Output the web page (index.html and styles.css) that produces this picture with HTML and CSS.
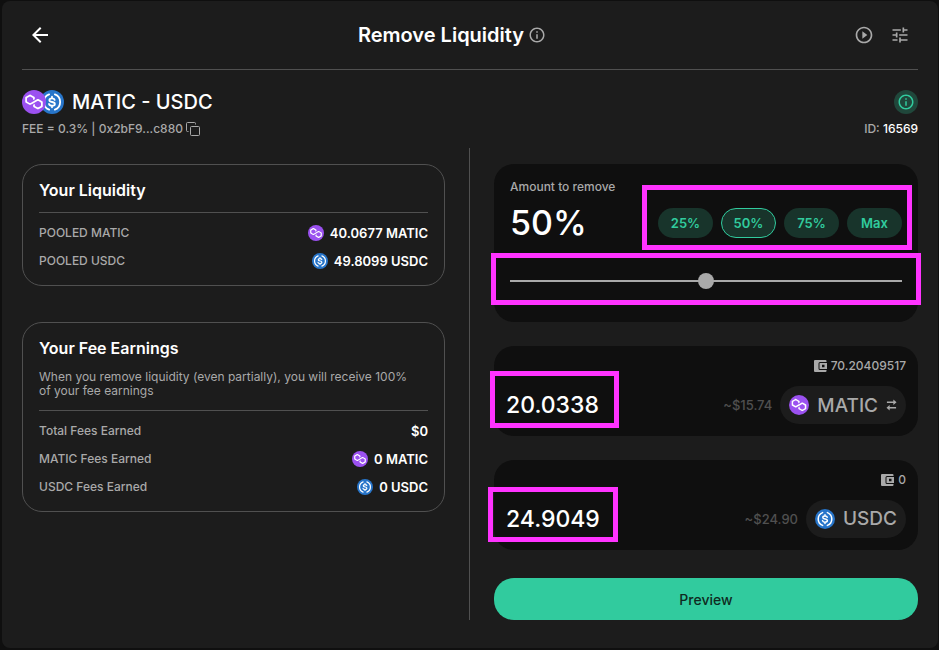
FILE: index.html
```html
<!DOCTYPE html>
<html lang="en">
<head>
    <meta charset="UTF-8">
    <meta name="viewport" content="width=device-width, initial-scale=1.0">
    <title>Remove Liquidity</title>
    <link rel="stylesheet" href="styles.css">
</head>
<body>
    <!-- Shared icons -->
    <svg class="sprite" aria-hidden="true">
        <symbol id="matic" viewBox="0 0 32 32">
            <circle cx="16" cy="16" r="16" fill="#9b51f0"/>
            <path transform="translate(16 16) scale(1.17) translate(-16 -16)" fill="#fff" d="M21.092 12.693c-.369-.215-.848-.215-1.254 0l-2.879 1.654-1.955 1.078-2.879 1.653c-.369.216-.848.216-1.254 0l-2.288-1.294c-.369-.215-.627-.61-.627-1.042V12.19c0-.431.221-.826.627-1.042l2.25-1.258c.37-.216.85-.216 1.256 0l2.25 1.258c.37.216.628.611.628 1.042v1.654l1.955-1.115v-1.653a1.16 1.16 0 00-.627-1.042l-4.17-2.372c-.369-.216-.848-.216-1.254 0l-4.244 2.372A1.16 1.16 0 006 11.076v4.78c0 .432.221.827.627 1.043l4.244 2.372c.369.215.849.215 1.254 0l2.879-1.618 1.955-1.114 2.879-1.617c.369-.216.848-.216 1.254 0l2.251 1.258c.37.215.627.61.627 1.042v2.552c0 .431-.22.826-.627 1.042l-2.25 1.294c-.37.216-.85.216-1.255 0l-2.251-1.258c-.37-.216-.628-.611-.628-1.042v-1.654l-1.955 1.115v1.653c0 .431.221.827.627 1.042l4.244 2.372c.369.216.848.216 1.254 0l4.244-2.372c.369-.215.627-.61.627-1.042v-4.78a1.16 1.16 0 00-.627-1.042l-4.28-2.409z"/>
        </symbol>
        <symbol id="usdc" viewBox="0 0 32 32">
            <circle cx="16" cy="16" r="16" fill="#2775ca"/>
            <g fill="none" stroke="#fff" stroke-width="2.4" stroke-linecap="round">
                <path d="M12.2 5.8a10.9 10.9 0 0 0 0 20.4M19.8 5.8a10.9 10.9 0 0 1 0 20.4"/>
                <path d="M19.6 13.2c-.4-1.4-1.7-2-3.6-2-2.1 0-3.5.9-3.5 2.3 0 3.6 7.3 1.4 7.3 5 0 1.5-1.5 2.5-3.8 2.5-2.2 0-3.6-.8-4-2.4M16 9v2M16 21v2"/>
            </g>
        </symbol>
        <symbol id="info" viewBox="0 0 24 24">
            <path d="M11 7h2v2h-2zm0 4h2v6h-2zm1-9C6.480 2 2 6.480 2 12s4.480 10 10 10 10-4.480 10-10S17.520 2 12 2zm0 18c-4.410 0-8-3.590-8-8s3.590-8 8-8 8 3.590 8 8-3.590 8-8 8z"/>
        </symbol>
        <symbol id="wallet" viewBox="0 0 13 12">
            <path fill-rule="evenodd" d="M1 0h10.500a1 1 0 0 1 1 1v1H6a1.500 1.500 0 0 0-1.500 1.500v5A1.500 1.500 0 0 0 6 10h6.500v1a1 1 0 0 1-1 1H1a1 1 0 0 1-1-1V1a1 1 0 0 1 1-1zM6 3h7v6H6a.5.5 0 0 1-.5-.5v-5A.5.5 0 0 1 6 3zm2 1.800v2.400h2.500V4.800z"/>
        </symbol>
    </svg>

    <main class="modal">
        <header class="header">
            <button type="button" class="icon-button" aria-label="Back">
                <svg class="icon-back" viewBox="0 0 24 24"><path d="M20 11H7.830l5.590-5.590L12 4l-8 8 8 8 1.410-1.410L7.830 13H20z"/></svg>
            </button>
            <div class="title">
                <h1>Remove Liquidity</h1>
                <svg class="icon-info"><use href="#info"/></svg>
            </div>
            <div class="actions">
                <button type="button" class="icon-button" aria-label="Tutorial">
                    <svg class="icon-md" viewBox="0 0 24 24"><path d="M10 16.500l6-4.500-6-4.500zM12 2C6.480 2 2 6.480 2 12s4.480 10 10 10 10-4.480 10-10S17.520 2 12 2zm0 18c-4.410 0-8-3.590-8-8s3.590-8 8-8 8 3.590 8 8-3.590 8-8 8z"/></svg>
                </button>
                <button type="button" class="icon-button" aria-label="Settings">
                    <svg class="icon-md" viewBox="0 0 24 24"><path d="M3 17v2h6v-2zM3 5v2h10V5zm10 16v-2h8v-2h-8v-2h-2v6zM7 9v2H3v2h4v2h2V9zm14 4v-2H11v2zm-6-4h2V7h4V5h-4V3h-2z"/></svg>
                </button>
            </div>
        </header>

        <!-- Pool -->
        <section class="pool">
            <div class="pool-row">
                <div class="pair">
                    <svg class="token-lg token-first"><use href="#matic"/></svg>
                    <svg class="token-lg token-second"><use href="#usdc"/></svg>
                    <h2>MATIC - USDC</h2>
                </div>
                <button type="button" class="info-button" aria-label="Position info">
                    <svg class="icon-info"><use href="#info"/></svg>
                </button>
            </div>
            <div class="pool-row pool-meta">
                <div class="address">
                    <span>FEE = 0.3% | 0x2bF9...c880</span>
                    <button type="button" class="copy-button" aria-label="Copy address">
                        <svg class="icon-copy" viewBox="0 0 14 14"><path d="M5.500 4.500h7a1 1 0 0 1 1 1v7a1 1 0 0 1-1 1h-7a1 1 0 0 1-1-1v-7a1 1 0 0 1 1-1zM2.500 9.500h-1a1 1 0 0 1-1-1v-7a1 1 0 0 1 1-1h7a1 1 0 0 1 1 1v1"/></svg>
                    </button>
                </div>
                <span>ID: <span class="pool-id">16569</span></span>
            </div>
        </section>

        <div class="columns">
            <div class="summary">
                <section class="card">
                    <h3>Your Liquidity</h3>
                    <dl class="rows">
                        <div class="row">
                            <dt>POOLED MATIC</dt>
                            <dd><svg class="token-sm"><use href="#matic"/></svg>40.0677 MATIC</dd>
                        </div>
                        <div class="row">
                            <dt>POOLED USDC</dt>
                            <dd><svg class="token-sm"><use href="#usdc"/></svg>49.8099 USDC</dd>
                        </div>
                    </dl>
                </section>

                <section class="card">
                    <h3>Your Fee Earnings</h3>
                    <p>When you remove liquidity (even partially), you will receive 100% of your fee earnings</p>
                    <dl class="rows">
                        <div class="row">
                            <dt>Total Fees Earned</dt>
                            <dd>$0</dd>
                        </div>
                        <div class="row">
                            <dt>MATIC Fees Earned</dt>
                            <dd><svg class="token-sm"><use href="#matic"/></svg>0 MATIC</dd>
                        </div>
                        <div class="row">
                            <dt>USDC Fees Earned</dt>
                            <dd><svg class="token-sm"><use href="#usdc"/></svg>0 USDC</dd>
                        </div>
                    </dl>
                </section>
            </div>

            <form class="remove-form">
                <div class="panel percent-panel">
                    <label for="percent">Amount to remove</label>
                    <div class="percent-row">
                        <output for="percent">50%</output>
                        <div class="presets">
                            <button type="button">25%</button>
                            <button type="button" class="active">50%</button>
                            <button type="button">75%</button>
                            <button type="button">Max</button>
                            <div class="mark mark-presets"></div>
                        </div>
                    </div>
                    <div class="slider">
                        <input type="range" id="percent" min="0" max="100" value="50">
                        <div class="mark mark-slider"></div>
                    </div>
                </div>

                <div class="panel token-panel">
                    <div class="balance"><svg class="icon-wallet"><use href="#wallet"/></svg>70.20409517</div>
                    <div class="token-row">
                        <div class="amount">
                            <input type="text" aria-label="MATIC amount" value="20.0338">
                            <div class="mark mark-matic"></div>
                        </div>
                        <span class="usd">~$15.74</span>
                        <button type="button" class="token-pill">
                            <svg class="token-md"><use href="#matic"/></svg>
                            MATIC
                            <svg class="icon-swap" viewBox="0 0 12 12"><path d="M8 0l3.500 3L8 6V3.800H1V2.200h7zM4 6v2.200h7v1.600H4V12L.5 9z"/></svg>
                        </button>
                    </div>
                </div>

                <div class="panel token-panel">
                    <div class="balance"><svg class="icon-wallet"><use href="#wallet"/></svg>0</div>
                    <div class="token-row">
                        <div class="amount">
                            <input type="text" aria-label="USDC amount" value="24.9049">
                            <div class="mark mark-usdc"></div>
                        </div>
                        <span class="usd">~$24.90</span>
                        <div class="token-pill">
                            <svg class="token-md"><use href="#usdc"/></svg>
                            USDC
                        </div>
                    </div>
                </div>

                <button type="button" class="preview">Preview</button>
            </form>
        </div>
    </main>
</body>
</html>
```

FILE: styles.css
```css
* {
    box-sizing: border-box;
}
body {
    margin: 0;
    padding: 1px 1px 2px 2px;
    min-height: 100vh;
    display: flex;
    background: #0f0f0f;
    color: #a9a9a9;
    font-family: Inter, "Work Sans", sans-serif;
    font-size: 12px;
    font-weight: 500;
    line-height: 16px;
}
h1, h2, h3, p, dl, dd {
    margin: 0;
}
h1, h2 {
    color: #fff;
    font-size: 20px;
    font-weight: 600;
    line-height: 24px;
}
h2 {
    font-weight: 500;
}
button, input {
    font-family: inherit;
    font-weight: 500;
    margin: 0;
}
button {
    border: none;
    padding: 0;
    background: none;
    color: inherit;
    cursor: pointer;
}
svg {
    display: block;
    flex-shrink: 0;
    fill: currentColor;
}
.sprite {
    display: none;
}
.modal {
    flex: 1;
    padding: 0 20px 28px;
    border-radius: 8px;
    background: #1c1c1c;
}

/* Header */
.header {
    display: flex;
    justify-content: space-between;
    align-items: center;
    padding: 16px 0;
    border-bottom: 1px solid #505050;
}
.title {
    display: flex;
    align-items: center;
    gap: 4px;
}
.actions {
    display: flex;
}
.icon-button {
    display: flex;
    align-items: center;
    justify-content: center;
    width: 36px;
    height: 36px;
}
.icon-back {
    width: 24px;
    height: 24px;
    color: #fff;
}
.icon-md {
    width: 20px;
    height: 20px;
}
.icon-info {
    width: 18px;
    height: 18px;
}

/* Pool */
.pool {
    padding: 20px 0 11px;
}
.pool-row {
    display: flex;
    justify-content: space-between;
    align-items: center;
}
.pool-meta {
    margin-top: 7px;
}
.pair {
    display: flex;
    align-items: center;
}
.token-lg {
    width: 24px;
    height: 24px;
}
.token-first {
    z-index: 1;
}
.token-second {
    margin: 0 8px 0 -6px;
}
.info-button {
    display: flex;
    align-items: center;
    justify-content: center;
    width: 24px;
    height: 24px;
    border-radius: 50%;
    background: #20473b;
    color: #31cb9e;
}
.address {
    display: flex;
    align-items: center;
    gap: 3px;
}
.icon-copy {
    width: 14px;
    height: 14px;
    fill: none;
    stroke: currentColor;
}
.pool-id {
    color: #fff;
}

/* Columns */
.columns {
    display: grid;
    grid-template-columns: minmax(0, 1fr) minmax(0, 1fr);
}
.summary {
    display: flex;
    flex-direction: column;
    gap: 36px;
    padding: 16px 24px 0 0;
    border-right: 1px solid #505050;
}
.card {
    padding: 16px;
    border: 1px solid #505050;
    border-radius: 20px;
}
.card h3 {
    color: #fff;
    font-size: 16px;
    font-weight: 600;
    line-height: 19px;
}
.card p {
    margin-top: 12px;
    padding-right: 12px;
    font-weight: 400;
    line-height: 14px;
}
.rows {
    display: flex;
    flex-direction: column;
    gap: 12px;
    margin-top: 12px;
    padding-top: 12px;
    border-top: 1px solid #505050;
}
.row {
    display: flex;
    justify-content: space-between;
}
.row dd {
    display: flex;
    align-items: center;
    gap: 6px;
    color: #fff;
    font-size: 13px;
    font-weight: 600;
}
.token-sm {
    width: 16px;
    height: 16px;
}

/* Remove form */
.remove-form {
    display: flex;
    flex-direction: column;
    gap: 24px;
    padding: 16px 0 0 24px;
}
.panel {
    border-radius: 20px;
    background: #0f0f0f;
}
.percent-panel {
    display: flex;
    flex-direction: column;
    padding: 15px 16px 33px;
}
.percent-row {
    display: flex;
    justify-content: space-between;
    align-items: center;
    margin-top: 6px;
    height: 44px;
}
.percent-row output {
    color: #fff;
    font-size: 34px;
    line-height: 44px;
}
.presets {
    position: relative;
    display: flex;
    gap: 8px;
}
.presets button {
    width: 55px;
    height: 30px;
    border-radius: 15px;
    background: #18342b;
    color: #31cb9e;
    font-size: 13px;
    font-weight: 600;
}
.presets .active {
    border: 1px solid #31cb9e;
}
.slider {
    position: relative;
    margin-top: 28px;
    height: 16px;
}
.slider input {
    display: block;
    width: 100%;
    height: 16px;
    appearance: none;
    background: linear-gradient(#a9a9a9, #a9a9a9) center / 100% 2px no-repeat;
}
.slider input::-webkit-slider-thumb {
    appearance: none;
    width: 16px;
    height: 16px;
    border-radius: 50%;
    background: #a9a9a9;
}
.token-panel {
    padding: 12px;
}
.balance {
    display: flex;
    justify-content: flex-end;
    align-items: center;
    gap: 4px;
}
.icon-wallet {
    width: 13px;
    height: 12px;
}
.token-row {
    display: flex;
    align-items: center;
    gap: 8px;
    margin-top: 12px;
}
.amount {
    position: relative;
    flex: 1;
    min-width: 0;
}
.amount input {
    display: block;
    width: 100%;
    height: 38px;
    border: none;
    padding: 0;
    background: none;
    color: #fff;
    font-size: 23px;
}
.usd {
    color: #505050;
    font-size: 13px;
}
.token-pill {
    display: flex;
    align-items: center;
    gap: 8px;
    height: 38px;
    padding: 0 9px;
    border-radius: 20px;
    background: #1c1c1c;
    font-size: 19px;
}
.token-md {
    width: 20px;
    height: 20px;
}
.icon-swap {
    width: 11px;
    height: 12px;
}
.preview {
    height: 42px;
    margin-top: 4px;
    border-radius: 20px;
    background: #31cb9e;
    color: #0f2a21;
    font-size: 14px;
}

/* Highlight frames */
.mark {
    position: absolute;
    border: 5px solid #ff33ff;
    pointer-events: none;
}
.mark-presets {
    inset: -23px -10px -12px -16px;
}
.mark-slider {
    inset: -20px -19px -16px -19px;
}
.mark-matic {
    top: -15px;
    bottom: -4px;
    left: -16px;
    width: 129px;
}
.mark-usdc {
    top: -13px;
    bottom: -4px;
    left: -18px;
    width: 130px;
}
```
